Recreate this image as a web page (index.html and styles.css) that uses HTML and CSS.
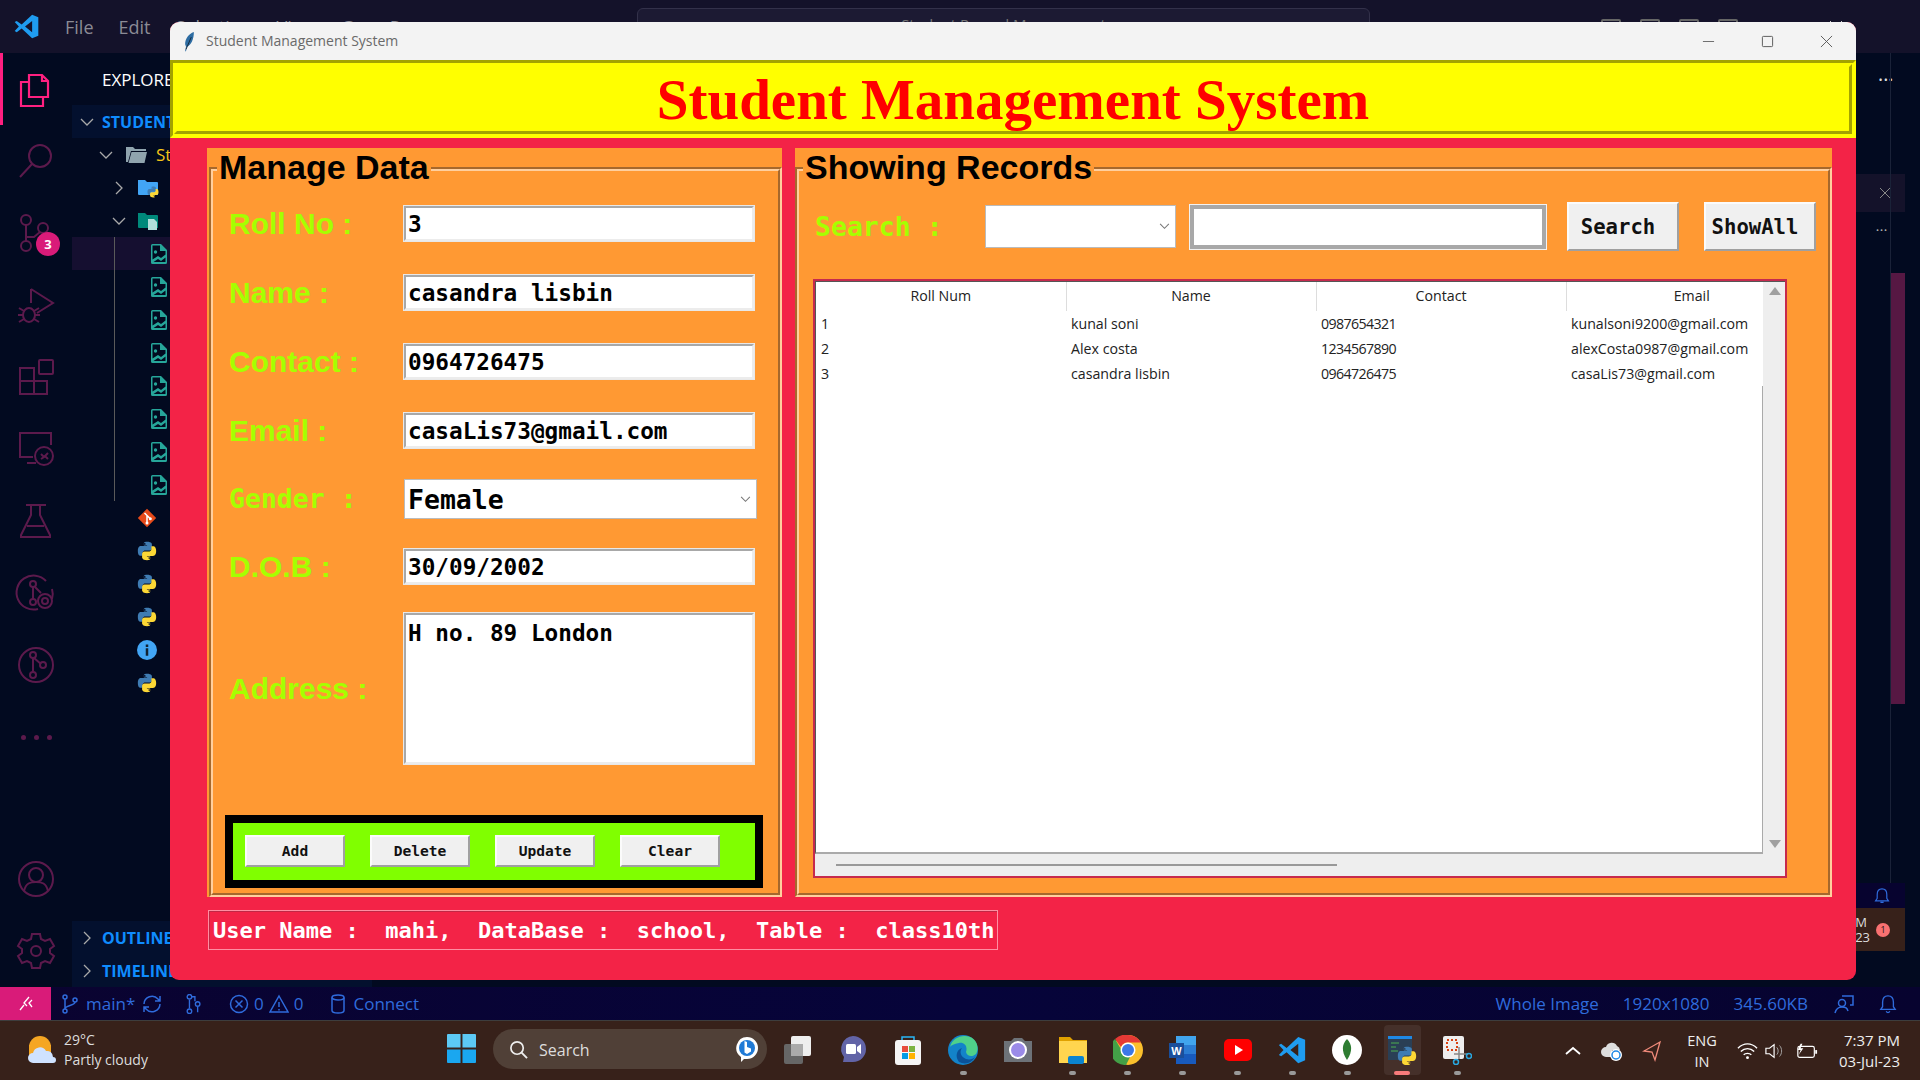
FILE: index.html
```html
<!DOCTYPE html>
<html lang="en">
<head>
<meta charset="utf-8">
<title>Student Management System</title>
<link rel="stylesheet" href="styles.css">
</head>
<body>
<svg class="defs" width="0" height="0" aria-hidden="true">
  <symbol id="py" viewBox="0 0 24 24">
    <path fill="#3f7cb3" d="M11.9 1C8 1 8.2 2.7 8.2 2.7V5.5h3.9v.6H4.6S1 5.8 1 11.9s3.300 5.900 3.300 5.900h2.400v-3s-.1-3.300 3.200-3.300h4.800s3.200 0 3.200-3.100V4.200S18.200 1 11.900 1zM9.300 2.500a1 1 0 1 1 0 2 1 1 0 0 1 0-2z"/>
    <path fill="#fdd835" d="M12.100 23c3.900 0 3.700-1.700 3.700-1.700v-2.800h-3.900v-.6h7.500s3.600.3 3.600-5.800-3.300-5.900-3.300-5.900h-2.400v3s.1 3.300-3.200 3.300H9.300s-3.200 0-3.200 3.100v3.600S5.800 23 12.100 23zm2.600-1.500a1 1 0 1 1 0-2 1 1 0 0 1 0 2z"/>
  </symbol>
  <symbol id="imgfile" viewBox="0 0 16 20">
    <path fill="#26a69a" d="M1.500 0H10l6 6v12.500a1.500 1.500 0 0 1-1.500 1.500h-13A1.500 1.500 0 0 1 0 18.500v-17A1.500 1.500 0 0 1 1.500 0z"/>
    <path fill="#020a20" d="M1.500 1.500H9V7h5.500v3.500L10 14l-3-2-5.500 3.500zM2.500 18 7 15l3 2 4.500-3.500V18z"/>
    <circle cx="4.500" cy="8" r="1.700" fill="#26a69a"/>
  </symbol>
  <symbol id="vsc" viewBox="0 0 24 24">
    <path fill="#1f9cf0" fill-rule="evenodd" d="M17 1.500 7.700 10.300 3.300 7 1.500 8l3.700 4-3.700 4 1.800 1 4.400-3.300 9.300 8.800 5.500-2.300V3.800zM17 7v10l-6.300-5z"/>
  </symbol>
</svg>

<div class="screen">
  <header class="vs-title">
    <svg class="vs-logo" viewBox="0 0 24 24"><use href="#vsc"/></svg>
    <nav class="vs-menu"><span>File</span><span>Edit</span><span>Selection</span><span>View</span><span>Go</span><span>Run</span><span>…</span></nav>
    <div class="command">Student Record Management</div>
    <div class="layout-btns"><i></i><i></i><i></i><i></i></div>
    <svg class="vs-close" viewBox="0 0 14 14"><path d="M1 1l12 12M13 1 1 13" stroke="#ccc" fill="none"/></svg>
  </header>

  <div class="vs-body">
    <aside class="activity">
      <div class="act active"><svg viewBox="0 0 36 36" class="pink"><path d="M11 4h13l6 6v16H11zM24 4v6h6M11 11H3v24h22v-9"/></svg></div>
      <div class="act"><svg viewBox="0 0 36 36"><circle cx="22" cy="13" r="11"/><path d="M14 21 2 34"/></svg></div>
      <div class="act badge-host"><svg viewBox="0 0 36 36"><circle cx="8" cy="5" r="5"/><circle cx="25" cy="13" r="5"/><circle cx="8" cy="31" r="5"/><path d="M8 10v16M8 22h8l6-5"/></svg><b class="badge">3</b></div>
      <div class="act"><svg viewBox="0 0 36 36"><path d="M13 2 35 16 19 26M13 2v14"/><ellipse cx="11" cy="28" rx="6" ry="7"/><path d="M1 21l5 3M1 35l5-3M0 28h5M21 21l-5 3M21 35l-5-3M17 28h5"/></svg></div>
      <div class="act"><svg viewBox="0 0 36 36"><path d="M2 9h14v13h13v13H2zM2 22h14v13"/><rect x="21" y="1" width="14" height="14" rx="1"/></svg></div>
      <div class="act"><svg viewBox="0 0 36 36"><path d="M33 14V2H2v24h13M9 32h9"/><circle cx="26" cy="25" r="9"/><path d="M23 23l3 3-3 2M30 22l-3 3 3 3"/></svg></div>
      <div class="act"><svg viewBox="0 0 36 36"><path d="M8 2h20M13 2v10L3 32v2h29v-2L22 12V2M9 23h17"/></svg></div>
      <div class="act"><svg viewBox="0 0 36 36"><path d="M28 6A17 17 0 1 0 20 34"/><path d="M34 14A17 17 0 0 1 34 24"/><circle cx="15" cy="9" r="3"/><circle cx="15" cy="27" r="3"/><path d="M15 12v12M17 12l6 6"/><circle cx="27" cy="26" r="7"/><circle cx="27" cy="26" r="3"/></svg></div>
      <div class="act"><svg viewBox="0 0 36 36"><circle cx="18" cy="18" r="17"/><circle cx="15" cy="8" r="3"/><circle cx="15" cy="28" r="3"/><circle cx="25" cy="18" r="3"/><path d="M15 11v14M16 11l7 6"/></svg></div>
      <div class="act dots"><i></i><i></i><i></i></div>
      <div class="act bottom"><svg viewBox="0 0 36 36"><circle cx="18" cy="18" r="17"/><circle cx="18" cy="14" r="7"/><path d="M6 30c2-8 6-9 12-9s10 1 12 9"/></svg></div>
      <div class="act"><svg viewBox="0 0 36 36"><path d="M14 1h8l1 5 4 2 5-2 4 7-4 3v4l4 3-4 7-5-2-4 2-1 5h-8l-1-5-4-2-5 2-4-7 4-3v-4L0 13l4-7 5 2 4-2z"/><circle cx="18" cy="18" r="5"/></svg></div>
    </aside>

    <aside class="sidebar">
      <div class="explorer">EXPLORER</div>
      <div class="row section"><svg class="chev ch-a" viewBox="0 0 14 14"><path d="M1 4l6 6 6-6"/></svg><span class="blue">STUDENT</span></div>
      <div class="row lv1"><svg class="chev" viewBox="0 0 14 14"><path d="M1 4l6 6 6-6"/></svg><svg class="ficon" viewBox="0 0 22 18"><path fill="#90a4ae" d="M1 1h7l2 2h11v2H6L3 16H1zM6.500 6H22l-2.500 11H3.500z"/></svg><span class="yel">Student</span></div>
      <div class="row lv2"><svg class="chev" viewBox="0 0 14 14"><path d="M4 1l6 6-6 6"/></svg><svg class="ficon" viewBox="0 0 22 20"><path fill="#42a5f5" d="M1 2h7l2 2h10a1 1 0 0 1 1 1v12H2a1 1 0 0 1-1-1z"/><use href="#py" x="10" y="8" width="12" height="12"/></svg></div>
      <div class="row lv2"><svg class="chev" viewBox="0 0 14 14"><path d="M1 4l6 6 6-6"/></svg><svg class="ficon" viewBox="0 0 22 20"><path fill="#00897b" d="M1 2h7l2 2h10a1 1 0 0 1 1 1v12H2a1 1 0 0 1-1-1z"/><path fill="#b2dfdb" d="M11 8h6l3 3v8h-9z"/></svg></div>
      <div class="row filerow hi"><span class="guide"><svg class="imgicon" viewBox="0 0 16 20"><use href="#imgfile"/></svg></span></div>
      <div class="row filerow"><span class="guide"><svg class="imgicon" viewBox="0 0 16 20"><use href="#imgfile"/></svg></span></div>
      <div class="row filerow"><span class="guide"><svg class="imgicon" viewBox="0 0 16 20"><use href="#imgfile"/></svg></span></div>
      <div class="row filerow"><span class="guide"><svg class="imgicon" viewBox="0 0 16 20"><use href="#imgfile"/></svg></span></div>
      <div class="row filerow"><span class="guide"><svg class="imgicon" viewBox="0 0 16 20"><use href="#imgfile"/></svg></span></div>
      <div class="row filerow"><span class="guide"><svg class="imgicon" viewBox="0 0 16 20"><use href="#imgfile"/></svg></span></div>
      <div class="row filerow"><span class="guide"><svg class="imgicon" viewBox="0 0 16 20"><use href="#imgfile"/></svg></span></div>
      <div class="row filerow"><span class="guide"><svg class="imgicon" viewBox="0 0 16 20"><use href="#imgfile"/></svg></span></div>
      <div class="row leaf"><svg class="leaficon" viewBox="0 0 24 24"><path fill="#e64a19" d="M12 1 23 12 12 23 1 12z"/><path d="M9 6l7 7M12 9v9" stroke="#fff" stroke-width="1.800"/><circle cx="16" cy="13" r="1.800" fill="#fff"/><circle cx="12" cy="18" r="1.800" fill="#fff"/></svg></div>
      <div class="row leaf"><svg class="leaficon" viewBox="0 0 24 24"><use href="#py"/></svg></div>
      <div class="row leaf"><svg class="leaficon" viewBox="0 0 24 24"><use href="#py"/></svg></div>
      <div class="row leaf"><svg class="leaficon" viewBox="0 0 24 24"><use href="#py"/></svg></div>
      <div class="row leaf"><svg class="leaficon" viewBox="0 0 24 24"><circle cx="12" cy="12" r="12" fill="#42a5f5"/><path d="M10.500 10h3v9h-3zM10.500 5.500h3v3h-3z" fill="#123"/></svg></div>
      <div class="row leaf"><svg class="leaficon" viewBox="0 0 24 24"><use href="#py"/></svg></div>
      <div class="foot-sections">
        <div class="row section"><svg class="chev ch-a" viewBox="0 0 14 14"><path d="M4 1l6 6-6 6"/></svg><span class="blue">OUTLINE</span></div>
        <div class="row section"><svg class="chev ch-a" viewBox="0 0 14 14"><path d="M4 1l6 6-6 6"/></svg><span class="blue">TIMELINE</span></div>
      </div>
    </aside>

    <aside class="rightside">
      <div class="more top-more">•••</div>
      <div class="r-tab"><svg viewBox="0 0 12 12"><path d="M1 1l10 10M11 1 1 11" stroke="#888" fill="none"/></svg></div>
      <div class="more small-more">•••</div>
      <div class="r-thumb"></div>
      <div class="r-line"></div>
      <div class="r-bell"><svg viewBox="0 0 20 22"><path d="M10 2c4 0 6 3 6 7v5l2 3H2l2-3V9c0-4 2-7 6-7zM8 19h4" fill="none" stroke="#2f6bdc" stroke-width="1.500"/></svg></div>
      <div class="r-clock"><span>M<br>23</span><b>1</b></div>
    </aside>
  </div>

  <footer class="status">
    <div class="remote"><svg viewBox="0 0 16 16"><path d="M11 1 6 7l3 3M2 14l4-5M14 4l-3 3 3 4" fill="none" stroke="#fff" stroke-width="1.300"/></svg></div>
    <svg class="st-i i-branch" viewBox="0 0 16 20"><circle cx="3" cy="3" r="2"/><circle cx="13" cy="6" r="2"/><circle cx="3" cy="17" r="2"/><path d="M3 5v10M13 8c0 4-10 3-10 7"/></svg>
    <span class="st-main">main*</span>
    <svg class="st-i i-sync" viewBox="0 0 20 20"><path d="M2 10a8 8 0 0 1 14-5l2 2M18 10a8 8 0 0 1-14 5l-2-2M18 2v5h-5M2 18v-5h5"/></svg>
    <svg class="st-i i-tree" viewBox="0 0 18 22"><circle cx="4" cy="3" r="2.500"/><circle cx="4" cy="19" r="2.500"/><circle cx="13" cy="11" r="2.500"/><path d="M4 6v10M13 14v6M6 3h4v5"/></svg>
    <svg class="st-i i-err" viewBox="0 0 20 20"><circle cx="10" cy="10" r="8.500"/><path d="M6.500 6.500l7 7M13.500 6.500l-7 7"/></svg>
    <span class="st-n">0</span>
    <svg class="st-i i-warn" viewBox="0 0 20 20"><path d="M10 2 19 18H1zM10 8v5M10 15v1.500"/></svg>
    <span class="st-n">0</span>
    <svg class="st-i i-db" viewBox="0 0 14 20"><ellipse cx="7" cy="3.500" rx="6" ry="2.500"/><path d="M1 3.500v13c0 1.500 3 2.500 6 2.500s6-1 6-2.500v-13"/></svg>
    <span class="st-connect">Connect</span>
    <span class="st-whole">Whole Image</span>
    <span class="st-dim">1920x1080</span>
    <span class="st-size">345.60KB</span>
    <svg class="st-i i-fb" viewBox="0 0 20 20"><circle cx="8" cy="9" r="3.500"/><path d="M1 19c1-4 3-6 7-6s5 1 6 4M8 2h11v9h-3"/></svg>
    <svg class="st-i i-bell" viewBox="0 0 20 22"><path d="M10 2c4 0 6 3 6 7v5l2 3H2l2-3V9c0-4 2-7 6-7zM8 19c1 2 3 2 4 0"/></svg>
  </footer>

  <footer class="taskbar">
    <div class="weather">
      <svg class="w-icon" viewBox="0 0 30 32"><circle cx="13" cy="12" r="11" fill="#f5a623"/><rect x="2" y="10" width="22" height="13" fill="#f5a623"/><path fill="#cfe2ff" d="M6 28a5 5 0 0 1 0-10 7 7 0 0 1 13-2 6 6 0 0 1 7 6 3 3 0 0 1 0 6z"/></svg>
      <div class="w-text"><span>29°C</span><span>Partly cloudy</span></div>
    </div>
    <svg class="winlogo" viewBox="0 0 30 30"><path fill="#5cc9f5" d="M0 1a1 1 0 0 1 1-1h13v14H0zM16 0h13a1 1 0 0 1 1 1v13H16z"/><path fill="#1aa7f0" d="M0 16h14v14H1a1 1 0 0 1-1-1zM16 16h14v13a1 1 0 0 1-1 1H16z"/></svg>
    <div class="pill">
      <svg viewBox="0 0 20 20" class="mag"><circle cx="8.500" cy="8.500" r="6.500" fill="none" stroke="#eee" stroke-width="1.800"/><path d="M13 13l6 6" stroke="#eee" stroke-width="2"/></svg>
      <span>Search</span>
      <svg viewBox="0 0 24 26" class="bing"><path fill="#fff" d="M12 1a11 11 0 0 1 0 22H9l-3 3v-5A11 11 0 0 1 12 1z"/><circle cx="12" cy="12" r="8" fill="#1f7ad6"/><path fill="#fff" d="M9.500 5l2.500 1v5l4 1.500v3L12 18l-2.500-1.500z"/></svg>
    </div>
    <div class="apps">
      <div class="app"><svg viewBox="0 0 28 30"><rect x="0" y="9" width="19" height="20" rx="2" fill="#666"/><rect x="7" y="1" width="20" height="20" rx="2" fill="#eee"/><rect x="7" y="9" width="12" height="12" fill="#aaa"/></svg></div>
      <div class="app"><svg viewBox="0 0 28 30"><path fill="#6264a7" d="M14 1a13 13 0 0 1 0 26H4l1-5A13 13 0 0 1 14 1z"/><rect x="7" y="9" width="10" height="10" rx="1.500" fill="#fff"/><path fill="#fff" d="M18 12l4-3v10l-4-3z"/></svg></div>
      <div class="app"><svg viewBox="0 0 28 30"><path d="M8 6V2h12v4" fill="none" stroke="#29b6f6" stroke-width="1.500"/><rect x="1" y="5" width="26" height="25" rx="3" fill="#f5f5f5"/><rect x="8" y="11" width="6" height="6" fill="#e74c3c"/><rect x="15" y="11" width="6" height="6" fill="#7cb342"/><rect x="8" y="18" width="6" height="6" fill="#039be5"/><rect x="15" y="18" width="6" height="6" fill="#ffb300"/></svg><i class="dot hide"></i></div>
      <div class="app"><svg viewBox="0 0 30 30"><circle cx="15" cy="15" r="15" fill="#1383c9"/><path fill="#4fd08a" d="M2 12C4 3 14-1 22 2s9 12 6 17c-3 3-9 3-10-2 2-6-2-10-7-9S3 10 2 12z"/><path fill="#0b5299" d="M11 27c-4-5-3-12 3-14-3 4-1 9 4 11 4 1 7 0 9-2-3 6-10 8-16 5z"/></svg><i class="dot"></i></div>
      <div class="app"><svg viewBox="0 0 30 30"><path fill="#6d7278" d="M1 6h7l3-3h8l3 3h7v21H1z"/><circle cx="15" cy="15" r="9" fill="#fff"/><circle cx="15" cy="15" r="7" fill="#9b8be8"/></svg></div>
      <div class="app"><svg viewBox="0 0 30 30"><path fill="#e0a100" d="M1 2h11l3 3h14v6H1z"/><rect x="1" y="6" width="28" height="22" fill="#ffd54f"/><rect x="10" y="21" width="16" height="8" rx="2" fill="#0a84d0"/></svg><i class="dot"></i></div>
      <div class="app"><svg viewBox="0 0 30 30"><circle cx="15" cy="15" r="15" fill="#fbc02d"/><path fill="#e53935" d="M15 0a15 15 0 0 1 13 7.500H15a7.500 7.500 0 0 0-7 4.500L2 4a15 15 0 0 1 13-4z"/><path fill="#43a047" d="M2 4l7 12a7 7 0 0 0 8 6l-4 8A15 15 0 0 1 2 4z"/><circle cx="15" cy="15" r="7.500" fill="#fff"/><circle cx="15" cy="15" r="6" fill="#3b78e7"/></svg><i class="dot"></i></div>
      <div class="app"><svg viewBox="0 0 30 30"><path fill="#41a5ee" d="M8 1h20v9H8z"/><path fill="#2b7cd3" d="M8 10h20v9H8z"/><path fill="#185abd" d="M8 19h20v10H8z"/><rect x="1" y="8" width="15" height="15" fill="#1a4f9c"/><text x="8.500" y="20" class="wtext">W</text></svg><i class="dot"></i></div>
      <div class="app"><svg viewBox="0 0 30 30"><rect x="1" y="4" width="28" height="22" rx="5" fill="#f00"/><path fill="#fff" d="M12 10l8 5-8 5z"/></svg><i class="dot"></i></div>
      <div class="app"><svg viewBox="0 0 24 24"><use href="#vsc"/></svg><i class="dot"></i></div>
      <div class="app"><svg viewBox="0 0 30 30"><circle cx="15" cy="15" r="15" fill="#fff"/><path fill="#2e7d32" d="M15 4c5 5 6 12 0 21-6-9-5-16 0-21z"/></svg><i class="dot"></i></div>
      <div class="app on"><svg viewBox="0 0 30 30"><rect x="1" y="1" width="24" height="24" fill="#2a3f55"/><rect x="1" y="1" width="24" height="3" fill="#1e88e5"/><path d="M4 8h8M4 12h5M4 16h7" stroke="#4caf50"/><use href="#py" x="10" y="11" width="20" height="20"/></svg><i class="dot red"></i></div>
      <div class="app"><svg viewBox="0 0 30 30"><rect x="1" y="1" width="21" height="23" rx="2" fill="#eee"/><path d="M5 5h10v10H5z" fill="none" stroke="#d84315" stroke-width="2" stroke-dasharray="2 2"/><path d="M17 12v12M12 19h14" stroke="#888" stroke-width="1.500"/><circle cx="14" cy="27" r="2.500" fill="none" stroke="#29a8e0" stroke-width="1.500"/><circle cx="27" cy="21" r="2.500" fill="none" stroke="#29a8e0" stroke-width="1.500"/></svg><i class="dot"></i></div>
    </div>
    <div class="tray">
      <svg class="t-caret" viewBox="0 0 16 10"><path d="M1 8l7-6 7 6" fill="none" stroke="#fff" stroke-width="1.800"/></svg>
      <svg class="t-cloud" viewBox="0 0 24 24"><path fill="#ddd" d="M6 18a5 5 0 0 1 0-10 6 6 0 0 1 11-1 5 5 0 0 1 3 4H12v7z"/><circle cx="16" cy="16" r="6" fill="#fff"/><circle cx="16" cy="16" r="4" fill="none" stroke="#1e88e5" stroke-width="1.500"/></svg>
      <svg class="t-nav" viewBox="0 0 20 22"><path d="M18 2 2 11l8 1 3 8z" fill="none" stroke="#f08a7a" stroke-width="1.300"/></svg>
      <div class="t-lang">ENG<br>IN</div>
      <svg class="t-wifi" viewBox="0 0 22 18"><path d="M1 6c6-6 14-6 20 0M4 9.500c4-4 10-4 14 0M7 13c2-2 6-2 8 0" fill="none" stroke="#fff" stroke-width="1.500"/><circle cx="11" cy="16" r="1.500" fill="#fff"/></svg>
      <svg class="t-vol" viewBox="0 0 22 18"><path d="M1 6h4l5-4v14l-5-4H1z" fill="none" stroke="#fff" stroke-width="1.300"/><path d="M13 5c2 2 2 6 0 8M16 3c3 3 3 9 0 12" fill="none" stroke="#aaa"/></svg>
      <svg class="t-bat" viewBox="0 0 24 18"><rect x="2" y="4" width="18" height="12" rx="2" fill="none" stroke="#fff" stroke-width="1.300"/><rect x="21" y="8" width="2" height="4" fill="#fff"/><path d="M5 1 2 8h3l-2 5 5-7H5l2-5z" fill="#fff"/></svg>
      <div class="t-clock">7:37 PM<br>03-Jul-23</div>
    </div>
  </footer>

  <section class="window">
    <div class="win-title">
      <svg class="feather" viewBox="0 0 14 24"><path fill="#2d6ca2" d="M12 1C6 3 2 9 2 15l1 3-1 5h1l1-5c5-2 8-9 8-17z"/><path d="M3 21 9 7" stroke="#123" fill="none"/></svg>
      <span class="win-name">Student Management System</span>
      <div class="win-ctrls">
        <svg viewBox="0 0 14 14"><path d="M1 7h12" stroke="#666" fill="none"/></svg>
        <svg viewBox="0 0 14 14"><rect x="1.500" y="1.500" width="11" height="11" rx="1" stroke="#555" fill="none"/></svg>
        <svg viewBox="0 0 14 14"><path d="M1 1l12 12M13 1 1 13" stroke="#555" fill="none"/></svg>
      </div>
    </div>
    <div class="app-head"><h1>Student Management System</h1></div>
    <div class="panels">
      <div class="panel manage">
        <div class="groove"><div class="groove-in">
          <h2 class="legend">Manage Data</h2>
          <div class="form">
            <label class="lbl">Roll No :</label><div class="entry">3</div>
            <label class="lbl">Name :</label><div class="entry">casandra lisbin</div>
            <label class="lbl">Contact :</label><div class="entry">0964726475</div>
            <label class="lbl">Email :</label><div class="entry">casaLis73@gmail.com</div>
            <label class="lbl mono">Gender :</label><div class="combo big"><span>Female</span><svg viewBox="0 0 12 8"><path d="M1 1l5 5 5-5" fill="none" stroke="#777" stroke-width="1.200"/></svg></div>
            <label class="lbl">D.O.B :</label><div class="entry">30/09/2002</div>
            <label class="lbl addr">Address :</label><div class="entry area">H no. 89 London</div>
          </div>
          <div class="btnbar">
            <button class="tkbtn small">Add</button>
            <button class="tkbtn small">Delete</button>
            <button class="tkbtn small">Update</button>
            <button class="tkbtn small">Clear</button>
          </div>
        </div></div>
      </div>
      <div class="panel records">
        <div class="groove"><div class="groove-in">
          <h2 class="legend">Showing Records</h2>
          <div class="searchrow">
            <label class="lbl mono srch">Search :</label>
            <div class="combo sm"><svg viewBox="0 0 12 8"><path d="M1 1l5 5 5-5" fill="none" stroke="#777" stroke-width="1.200"/></svg></div>
            <div class="sentry"></div>
            <button class="tkbtn big">Search</button>
            <button class="tkbtn big">ShowAll</button>
          </div>
          <div class="tableframe">
            <div class="tree-top">
              <div class="tree-main">
                <table class="tree">
                  <thead><tr><th>Roll Num</th><th>Name</th><th>Contact</th><th>Email</th></tr></thead>
                  <tbody>
                    <tr><td>1</td><td>kunal soni</td><td class="num">0987654321</td><td>kunalsoni9200@gmail.com</td></tr>
                    <tr><td>2</td><td>Alex costa</td><td class="num">1234567890</td><td>alexCosta0987@gmail.com</td></tr>
                    <tr><td>3</td><td>casandra lisbin</td><td class="num">0964726475</td><td>casaLis73@gmail.com</td></tr>
                  </tbody>
                </table>
                <div class="tree-fill"></div>
              </div>
              <div class="vscroll"><i class="up"></i><i class="down"></i></div>
            </div>
            <div class="hscroll"><i></i></div>
          </div>
        </div></div>
      </div>
    </div>
    <div class="userline">User Name :  mahi,  DataBase :  school,  Table :  class10th</div>
  </section>
</div>
</body>
</html>
```

FILE: styles.css
```css
* { box-sizing: border-box; }
html, body { margin: 0; padding: 0; }
body { width: 1920px; height: 1080px; overflow: hidden; background: #020a20; font-family: "Open Sans", "Noto Sans", sans-serif; }
.defs { position: absolute; }
.screen { position: relative; width: 1920px; height: 1080px; display: flex; flex-direction: column; overflow: hidden; }

/* VS Code chrome */
.vs-title { height: 53px; background: #14122a; display: flex; align-items: center; flex: none; color: #8b8b95; font-size: 18px; }
.vs-logo { width: 27px; height: 27px; margin-left: 13px; flex: none; }
.vs-menu { display: flex; gap: 25px; margin-left: 25px; width: 528px; }
.command { width: 733px; margin-left: 44px; height: 32px; margin-top: -6px; border: 1px solid #33314a; border-radius: 6px; background: #1c1a33; text-align: center; font-size: 15px; line-height: 30px; color: #777; flex: none; }
.layout-btns { display: flex; gap: 19px; margin-left: 231px; }
.layout-btns i { width: 20px; height: 16px; border: 2px solid #666; border-radius: 2px; }
.vs-close { width: 14px; height: 14px; margin-left: 91px; flex: none; }

.vs-body { flex: 1; display: flex; min-height: 0; position: relative; }
.activity { width: 72px; flex: none; display: flex; flex-direction: column; background: #020a20; }
.act { height: 72px; flex: none; display: flex; align-items: center; justify-content: center; position: relative; }
.act.active { border-left: 3px solid #ff1f80; padding-right: 3px; }
.act svg { width: 36px; height: 36px; fill: none; stroke: #5c1a4c; stroke-width: 2; overflow: visible; }
.act svg.pink { stroke: #ff2080; stroke-width: 2.200; }
.act.bottom { margin-top: auto; }
.dots { gap: 8px; }
.dots i { width: 5px; height: 5px; border-radius: 50%; background: #5c1a4c; }
.badge { position: absolute; left: 36px; top: 35px; width: 24px; height: 24px; border-radius: 50%; background: #d91b79; color: #fff; font-size: 13px; line-height: 24px; text-align: center; }

.sidebar { width: 300px; flex: none; display: flex; flex-direction: column; background: #020a20; overflow: hidden; }
.explorer { height: 52px; line-height: 54px; padding-left: 30px; color: #fff; font-size: 17px; flex: none; }
.row { height: 33px; flex: none; display: flex; align-items: center; }
.section { background: #03102e; padding-left: 8px; }
.chev { width: 14px; height: 14px; fill: none; stroke: #a9a9a9; stroke-width: 1.300; flex: none; }
.ch-a { margin-right: 8px; }
.blue { color: #0f8cff; font-weight: 700; font-size: 16px; }
.yel { color: #f5c518; font-size: 17px; margin-left: 9px; }
.lv1 { padding-left: 27px; }
.lv1 .ficon { margin-left: 12px; }
.lv2 { padding-left: 40px; }
.lv2 .ficon { margin-left: 11px; }
.ficon { width: 22px; height: 20px; flex: none; }
.filerow { padding-left: 42px; }
.filerow.hi { background: #150f30; }
.guide { height: 33px; border-left: 1px solid #5a5a5a; padding-left: 36px; display: flex; align-items: center; }
.imgicon { width: 16px; height: 20px; }
.leaf { padding-left: 65px; }
.leaficon { width: 20px; height: 20px; }
.foot-sections { margin-top: auto; }

.rightside { flex: 1; position: relative; background: #020a20; }
.more { position: absolute; color: #ddd; font-size: 11px; letter-spacing: 1px; }
.top-more { right: 26px; top: 19px; }
.small-more { right: 32px; top: 171px; color: #aaa; font-size: 8px; }
.r-tab { position: absolute; right: 15px; top: 121px; width: 60px; height: 38px; background: #14122a; display: flex; align-items: center; justify-content: center; padding-left: 20px; }
.r-tab svg { width: 12px; height: 12px; }
.r-thumb { position: absolute; right: 15px; top: 220px; width: 15px; height: 431px; background: #561843; }
.r-line { position: absolute; right: 29px; top: 0; width: 1px; height: 830px; background: #1a2238; }
.r-bell { position: absolute; right: 15px; top: 830px; width: 60px; height: 25px; background: #07032f; display: flex; justify-content: flex-end; align-items: center; padding-right: 15px; }
.r-bell svg { width: 16px; height: 20px; }
.r-clock { position: absolute; right: 15px; top: 855px; width: 60px; height: 43px; background: #37211a; color: #ddd; font-size: 13px; line-height: 15px; display: flex; align-items: center; gap: 6px; justify-content: flex-end; padding-right: 15px; }
.r-clock b { width: 14px; height: 14px; border-radius: 50%; background: #f87171; color: #111; font-size: 9px; line-height: 14px; text-align: center; font-weight: 400; }

/* Status bar */
.status { height: 34px; flex: none; background: linear-gradient(90deg, #0a0330, #06043a 50%, #07032f); display: flex; align-items: center; color: #2f6bdc; font-size: 17px; border-bottom: 1px solid #3d3d3d; }
.remote { width: 51px; height: 33px; background: #d91b79; display: flex; align-items: center; justify-content: center; flex: none; }
.remote svg { width: 16px; height: 16px; }
.st-i { fill: none; stroke: #2f6bdc; stroke-width: 1.500; flex: none; width: 18px; height: 20px; }
.i-branch { margin-left: 11px; width: 16px; }
.st-main { margin-left: 8px; width: 46px; }
.i-sync { margin-left: 10px; width: 20px; }
.i-tree { margin-left: 23px; }
.i-err { margin-left: 26px; width: 20px; }
.st-n { margin: 0 5px; }
.i-warn { width: 20px; }
.i-db { margin-left: 23px; width: 14px; }
.st-connect { margin-left: 8px; width: 73px; }
.st-whole { margin-left: auto; }
.st-dim { margin-left: 24px; }
.st-size { margin-left: 24px; }
.i-fb { margin-left: 26px; width: 20px; }
.i-bell { margin-left: 25px; margin-right: 23px; width: 18px; }

/* Taskbar */
.taskbar { height: 59px; flex: none; background: #37211a; display: flex; align-items: flex-start; color: #eee; position: relative; }
.weather { display: flex; width: 447px; padding-left: 27px; padding-top: 9px; flex: none; }
.w-icon { width: 30px; height: 32px; margin-top: 5px; }
.w-text { display: flex; flex-direction: column; margin-left: 7px; font-size: 14px; line-height: 20px; color: #ddd; }
.winlogo { width: 29px; height: 29px; margin-top: 13px; flex: none; }
.pill { width: 274px; height: 40px; margin: 8px 0 0 17px; border-radius: 20px; background: #504037; display: flex; align-items: center; padding: 0 8px 0 16px; color: #ddd; font-size: 16px; flex: none; }
.mag { width: 19px; height: 19px; }
.pill span { margin-left: 11px; flex: 1; padding-top: 2px; }
.bing { width: 24px; height: 26px; }
.apps { display: flex; margin-left: 4px; flex: none; }
.app { width: 54.900px; height: 59px; display: flex; flex-direction: column; align-items: center; padding-top: 14px; position: relative; }
.app svg { width: 30px; height: 30px; flex: none; }
.app.on::before { content: ""; position: absolute; left: 9px; top: 4px; width: 37px; height: 50px; background: rgba(255,255,255,.07); border-radius: 4px; }
.app.on svg { position: relative; }
.dot { width: 7px; height: 4px; border-radius: 2px; background: #999; margin-top: 6px; }
.dot.hide { visibility: hidden; }
.dot.red { width: 16px; background: #f87171; }
.wtext { font-family: "Liberation Sans", sans-serif; font-size: 11px; font-weight: 700; fill: #fff; text-anchor: middle; }
.tray { display: flex; align-items: center; height: 59px; margin-left: auto; padding-right: 20px; flex: none; }
.t-caret { width: 16px; height: 10px; }
.t-cloud { width: 24px; height: 24px; margin-left: 19px; }
.t-nav { width: 20px; height: 22px; margin-left: 18px; }
.t-lang { width: 44px; margin-left: 18px; font-size: 14.500px; line-height: 21px; text-align: center; }
.t-wifi { width: 21px; height: 18px; margin-left: 13px; }
.t-vol { width: 20px; height: 18px; margin-left: 7px; }
.t-bat { width: 22px; height: 18px; margin-left: 11px; }
.t-clock { margin-left: 8px; width: 74px; text-align: right; font-size: 15px; line-height: 21px; white-space: nowrap; }

/* Tk window */
.window { position: absolute; left: 170px; top: 22px; width: 1686px; height: 958px; border-radius: 9px; overflow: hidden; background: #f32347; display: flex; flex-direction: column; }
.win-title { height: 38px; background: #f3f3f3; display: flex; align-items: center; flex: none; padding-left: 13px; }
.feather { width: 13px; height: 21px; }
.win-name { margin-left: 10px; color: #6a6a6a; font-size: 14px; padding-bottom: 2px; }
.win-ctrls { margin-left: auto; display: flex; gap: 46px; padding-right: 23px; }
.win-ctrls svg { width: 13px; height: 13px; }
.app-head { height: 78px; flex: none; background: #ffff00; border: 3px solid; border-color: #a3a300 #ffff00 #ffff00 #a3a300; position: relative; display: flex; align-items: center; justify-content: center; }
.app-head::after { content: ""; position: absolute; inset: 1px; border: 3px solid; border-color: #ffff00 #a3a300 #a3a300 #ffff00; }
.app-head h1 { margin: 0; font-family: "Liberation Serif", serif; font-weight: 700; font-size: 57px; color: #ff0000; line-height: 1; position: relative; z-index: 1; }

.panels { display: flex; gap: 13px; padding: 10px 24px 0 37px; flex: none; }
.panel { height: 749px; background: #ff9933; padding: 19px 0 0 2px; }
.manage { width: 575px; }
.records { width: 1037px; padding-left: 0; }
.groove { height: 100%; border: 2px solid; border-color: #a6682c #ffcf9e #ffcf9e #a6682c; }
.groove-in { height: 100%; border: 2px solid; border-color: #ffcf9e #a6682c #a6682c #ffcf9e; position: relative; }
.legend { position: absolute; left: 4px; top: -23px; margin: 0; padding: 0 2px 0 2px; background: #ff9933; font-family: "Liberation Sans", sans-serif; font-weight: 700; font-size: 34px; line-height: 38px; color: #000; white-space: pre; }

.form { display: grid; grid-template-columns: 175px 353px; grid-template-rows: 69px 69px 69px 66px 70px 64px 151px; padding: 35px 0 0 16px; align-items: start; }
.lbl { font-family: "Liberation Sans", sans-serif; font-weight: 700; font-size: 30px; line-height: 36px; color: #a6ff00; white-space: pre; }
.lbl.mono { font-family: "DejaVu Sans Mono", monospace; font-size: 26.500px; line-height: 40px; }
.lbl.addr { align-self: center; }
.entry { width: 350px; height: 35px; background: #fff; border: 2px solid; border-color: #a8a8a8 #ececec #ececec #a8a8a8; outline: 1px solid #e8e8e8; font-family: "DejaVu Sans Mono", monospace; font-weight: 700; font-size: 22.700px; line-height: 33px; padding-left: 2px; color: #000; white-space: pre; }
.entry.area { height: 151px; line-height: 36px; }
.combo { background: #fff; border: 1px solid #bbb; display: flex; align-items: center; justify-content: space-between; }
.combo svg { width: 11px; height: 7px; margin-right: 5px; flex: none; }
.combo.big { width: 353px; height: 40px; padding-left: 3px; margin-right: auto; font-family: "DejaVu Sans Mono", monospace; font-weight: 700; font-size: 26.500px; color: #000; }
.combo.sm { width: 191px; height: 43px; justify-content: flex-end; flex: none; }

.btnbar { margin: 51px 0 0 12px; width: 538px; height: 73px; border: 8px solid #000; background: #80ff00; display: flex; gap: 25px; padding: 12px 0 0 12px; }
.tkbtn { background: #f0f0f0; border: 2px solid; border-color: #fbfbfb #a0a0a0 #a0a0a0 #fbfbfb; font-family: "DejaVu Sans Mono", monospace; font-weight: 700; color: #111; padding: 0; flex: none; }
.tkbtn.small { width: 100px; height: 32px; font-size: 14.600px; padding-bottom: 2px; }
.tkbtn.big { width: 112px; height: 49px; font-size: 20.600px; margin-left: 25px; padding-right: 10px; }
.tkbtn.big:first-of-type { margin-left: 21px; }

.searchrow { display: flex; align-items: center; height: 49px; margin: 31px 0 0 16px; }
.srch { width: 170px; flex: none; }
.sentry { width: 356px; height: 44px; margin-left: 14px; background: #fff; border: 4px solid #a8a8a8; outline: 1px solid #f2f2f2; flex: none; }

.tableframe { margin: 28px 0 0 14px; width: 974px; height: 599px; border: 2px solid #c62a4d; background: #eee; display: flex; flex-direction: column; }
.tree-top { flex: 1; display: flex; min-height: 0; border-top: 1px solid #555; }
.tree-main { flex: 1; background: #fff; display: flex; flex-direction: column; border-left: 1px solid #555; border-bottom: 2px solid #aaa; }
.tree { border-collapse: collapse; table-layout: fixed; width: 947px; font-size: 14.200px; color: #222; flex: none; }
.tree th { height: 29px; font-weight: 400; text-align: center; padding: 0 0 2px 0; border-right: 1px solid #ddd; width: 250px; }
.tree th:last-child { border-right: 0; width: 197px; padding-left: 54px; }
.tree td { height: 25px; padding: 0 0 0 5px; white-space: nowrap; }
.tree td.num { letter-spacing: -.6px; }
.tree-fill { flex: 1; border-right: 1px solid #aaa; }
.vscroll { width: 24px; flex: none; position: relative; }
.vscroll i { position: absolute; left: 6px; width: 0; height: 0; border-left: 6px solid transparent; border-right: 6px solid transparent; }
.vscroll .up { top: 5px; border-bottom: 8px solid #a0a0a0; }
.vscroll .down { bottom: 6px; border-top: 8px solid #a0a0a0; }
.hscroll { height: 22px; flex: none; display: flex; align-items: center; padding-left: 21px; }
.hscroll i { width: 501px; height: 2px; background: #999; }

.userline { margin: 13px 0 0 38px; width: 790px; height: 40px; border: 1px solid #ff8ea2; box-shadow: inset 1px 1px 0 #c02845; font-family: "DejaVu Sans Mono", monospace; font-weight: 700; font-size: 22px; line-height: 40px; color: #fff; padding-left: 4px; white-space: pre; flex: none; }
```
